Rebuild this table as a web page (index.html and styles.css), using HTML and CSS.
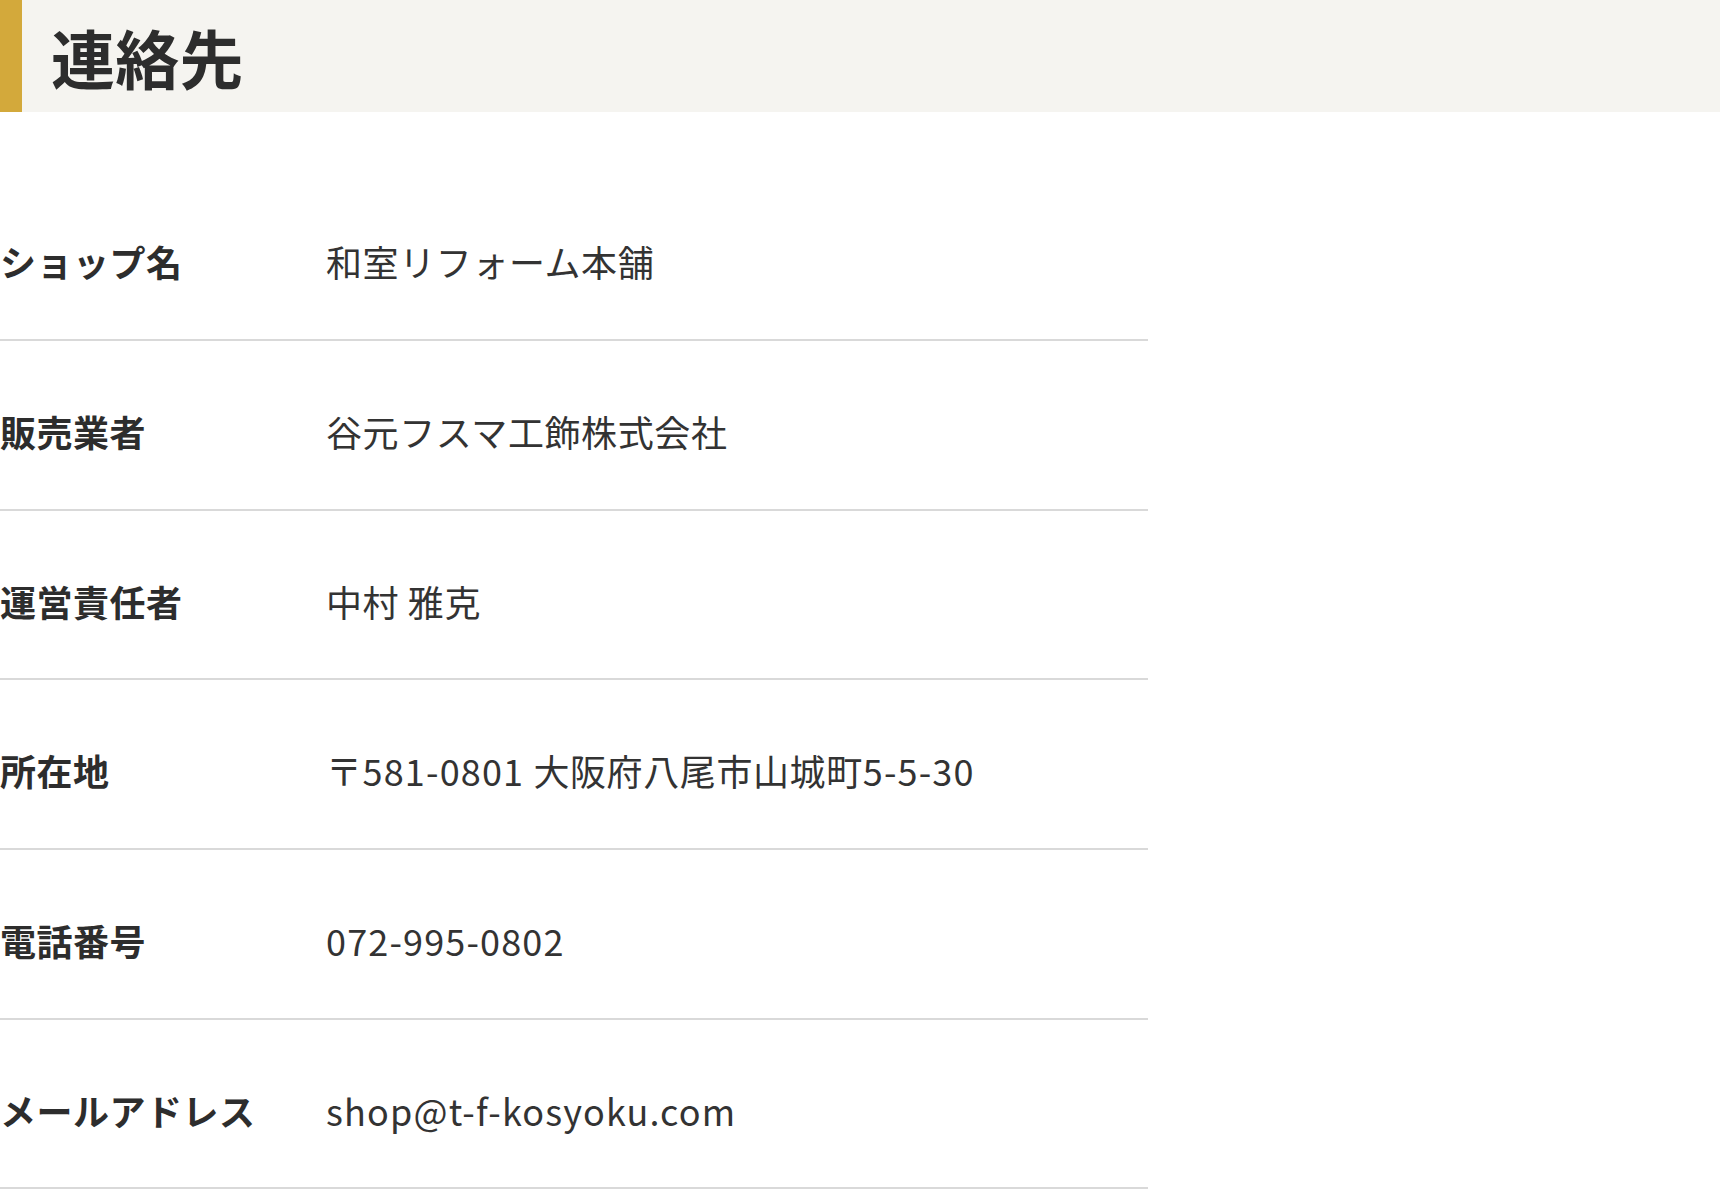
FILE: index.html
```html
<!DOCTYPE html>
<html lang="ja">
<head>
<meta charset="utf-8">
<title>連絡先</title>
<link rel="stylesheet" href="styles.css">
</head>
<body>
<h1 class="heading">連絡先</h1>
<dl class="info">
  <div class="row"><dt>ショップ名</dt><dd>和室リフォーム本舗</dd></div>
  <div class="row"><dt>販売業者</dt><dd>谷元フスマ工飾株式会社</dd></div>
  <div class="row"><dt>運営責任者</dt><dd>中村 雅克</dd></div>
  <div class="row"><dt>所在地</dt><dd>〒<span class="latin">581-0801 </span>大阪府八尾市山城町<span class="latin">5-5-30</span></dd></div>
  <div class="row"><dt>電話番号</dt><dd><span class="latin">072-995-0802</span></dd></div>
  <div class="row"><dt>メールアドレス</dt><dd><span class="latin">shop@t-f-kosyoku.com</span></dd></div>
</dl>
</body>
</html>
```
FILE: styles.css
```css
html, body {
  margin: 0;
  padding: 0;
  background: #ffffff;
}
body {
  font-family: "Noto Sans CJK JP", "Noto Sans", sans-serif;
  color: #333333;
}
.heading {
  margin: 0;
  height: 112px;
  box-sizing: border-box;
  display: flex;
  align-items: center;
  background: #f5f4f0;
  border-left: 22px solid #d3a93b;
  padding-left: 29px;
  font-size: 64px;
  font-weight: 700;
  line-height: 1;
  color: #2d2d2d;
  letter-spacing: 0.3px;
}
.info {
  margin: 59.3px 0 0 0;
  width: 1148px;
}
.row {
  display: flex;
  align-items: center;
  height: 169.7px;
  box-sizing: border-box;
  padding-top: 12px;
  border-bottom: 2px solid #d9d9d9;
  font-size: 36px;
  line-height: 1.5;
}
.row dt {
  width: 326px;
  flex: none;
  font-weight: 700;
  letter-spacing: 0.5px;
  color: #2d2d2d;
}
.row dd {
  margin: 0;
  font-weight: 400;
  letter-spacing: 0.6px;
}
.row .latin {
  letter-spacing: 1.15px;
}
```
